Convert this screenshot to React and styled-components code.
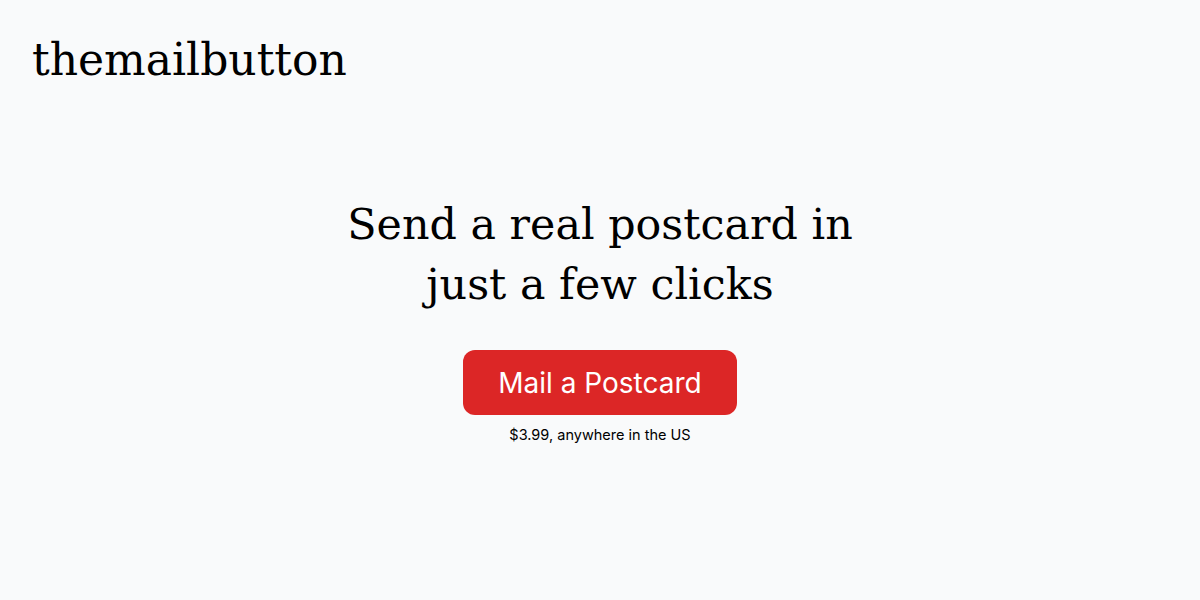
import React from "react";
import styled, { createGlobalStyle } from "styled-components";

const GlobalStyle = createGlobalStyle`
  html, body {
    margin: 0;
    padding: 0;
    background: #f9fafb;
  }
  #root {
    min-height: 100vh;
  }
`;

const Page = styled.div`
  min-height: 100vh;
  display: flex;
  flex-direction: column;
  font-family: Inter, "Noto Sans", sans-serif;
  color: #000;
`;

const Header = styled.header`
  padding: 30px 32px 0;
`;

const Logo = styled.div`
  font-family: Georgia, "DejaVu Serif", serif;
  font-size: 44px;
  line-height: 60px;
`;

const Main = styled.main`
  display: flex;
  flex-direction: column;
  align-items: center;
  padding-top: 104px;
`;

const Headline = styled.h1`
  margin: 0;
  font-family: Georgia, "DejaVu Serif", serif;
  font-weight: 400;
  font-size: 42.8px;
  line-height: 60px;
  text-align: center;
`;

const MailButton = styled.button`
  margin-top: 36px;
  width: 274px;
  height: 65px;
  border: none;
  border-radius: 12px;
  background: #dc2626;
  color: #fff;
  font-family: Inter, sans-serif;
  font-size: 28px;
  cursor: pointer;
`;

const Price = styled.p`
  margin: 10px 0 0;
  font-size: 14.5px;
  line-height: 20px;
`;

export default function App() {
  return (
    <Page>
      <GlobalStyle />
      <Header>
        <Logo>themailbutton</Logo>
      </Header>
      <Main>
        <Headline>
          Send a real postcard in
          <br />
          just a few clicks
        </Headline>
        <MailButton>Mail a Postcard</MailButton>
        <Price>$3.99, anywhere in the US</Price>
      </Main>
    </Page>
  );
}
